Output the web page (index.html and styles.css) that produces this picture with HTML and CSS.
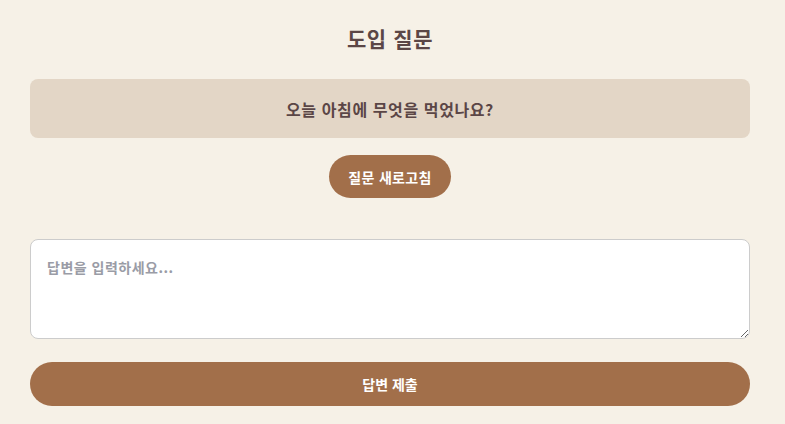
FILE: index.html
```html
<!DOCTYPE html>
<html lang="ko">
<head>
<meta charset="utf-8">
<link rel="stylesheet" href="styles.css">
</head>
<body>
<main class="wrap">
  <h1 class="title">도입 질문</h1>
  <div class="question">오늘 아침에 무엇을 먹었나요?</div>
  <div class="refresh-row"><button class="refresh">질문 새로고침</button></div>
  <textarea class="answer" placeholder="답변을 입력하세요..."></textarea>
  <button class="submit">답변 제출</button>
</main>
</body>
</html>
```
FILE: styles.css
```css
* { box-sizing: border-box; }
html, body { margin: 0; padding: 0; }
body {
  background: #f6f1e7;
  font-family: "Noto Sans CJK KR", "Noto Sans", sans-serif;
  color: #5b4646;
  width: 785px;
  height: 424px;
  overflow: hidden;
}
.wrap {
  width: 720px;
  margin-left: 30px;
  display: flex;
  flex-direction: column;
  padding-top: 22px;
}
.title {
  margin: 0;
  text-align: center;
  font-size: 21px;
  letter-spacing: 0.6px;
  font-weight: 700;
  line-height: 32px;
  height: 32px;
}
.question {
  margin-top: 25px;
  height: 59px;
  background: #e3d6c6;
  border-radius: 8px;
  display: flex;
  align-items: center;
  justify-content: center;
  font-size: 16px;
  letter-spacing: 0.6px;
  font-weight: 700;
  color: #5b4646;
}
.refresh-row {
  margin-top: 17px;
  display: flex;
  justify-content: center;
}
.refresh {
  width: 122px;
  height: 43px;
  border: none;
  border-radius: 22px;
  background: #a26f4a;
  color: #fff;
  font-family: inherit;
  font-size: 14px;
  letter-spacing: 0.3px;
  font-weight: 700;
  padding: 0;
}
.answer {
  margin-top: 41px;
  height: 100px;
  width: 720px;
  border: 1px solid #cccccc;
  border-radius: 8px;
  background: #fff;
  padding: 16px 16px;
  font-family: inherit;
  font-size: 14px;
  letter-spacing: 0.5px;
  line-height: 22px;
  resize: vertical;
  display: block;
}
.answer::placeholder {
  color: #9a9ca6;
  font-weight: 700;
}
.submit {
  margin-top: 23px;
  height: 44px;
  width: 720px;
  border: none;
  border-radius: 22px;
  background: #a26f4a;
  color: #fff;
  font-family: inherit;
  font-size: 14px;
  font-weight: 700;
  padding: 0;
}
```
